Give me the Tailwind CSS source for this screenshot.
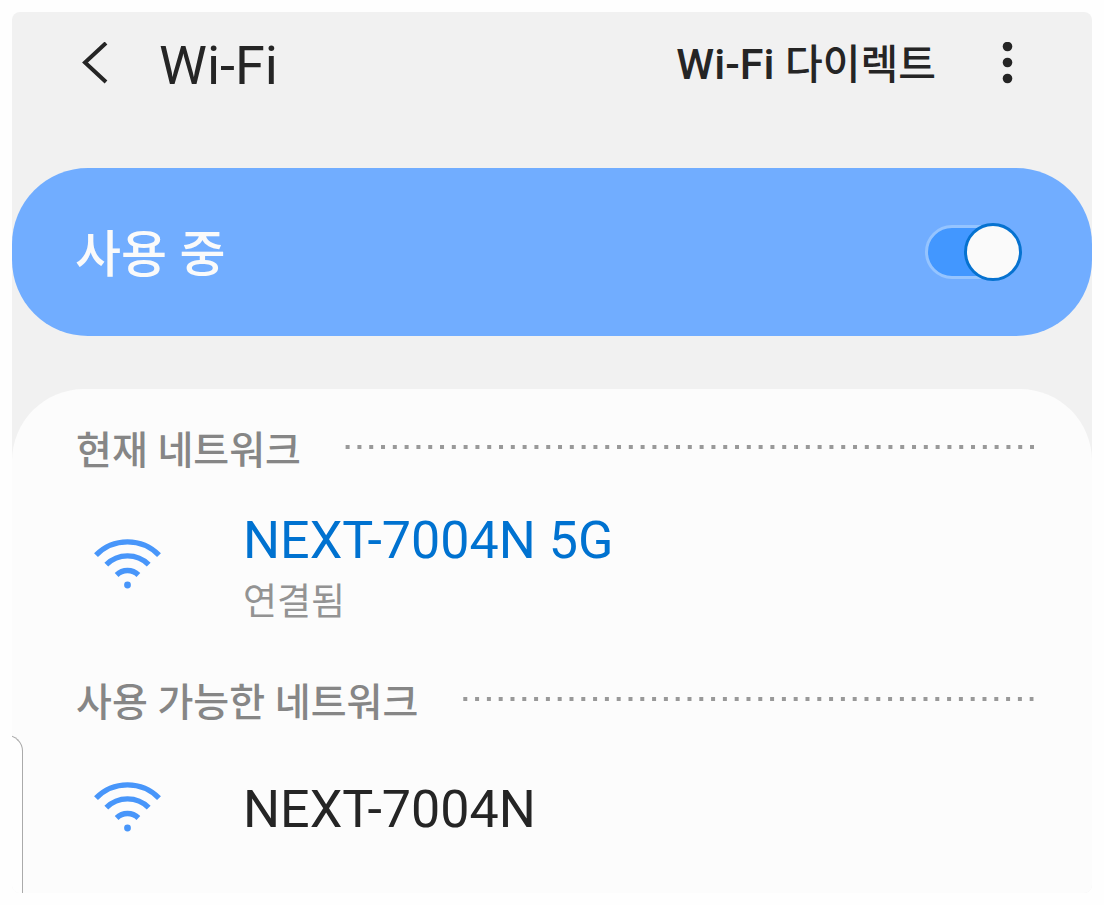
<!DOCTYPE html>
<html lang="ko">
<head>
    <meta charset="UTF-8">
    <meta name="viewport" content="width=device-width, initial-scale=1.0">
    <title>Wi-Fi</title>
    <script src="https://cdn.jsdelivr.net/npm/@tailwindcss/browser@4"></script>
</head>
<body class="min-h-screen bg-[#fefefe] p-3 font-[Roboto,'Noto_Sans_CJK_KR',sans-serif] text-[#252525]">
    <main class="overflow-hidden rounded-lg bg-[#f1f1f1]">
        <header class="flex items-center pt-[22px] pr-[74px] pb-[70px] pl-[70px]">
            <button type="button" aria-label="뒤로" class="shrink-0">
                <svg class="block h-12 w-7" viewBox="0 0 28 48" fill="none" stroke="currentColor" stroke-width="4">
                    <path d="M24 1 L3 20.5 L24 40" />
                </svg>
            </button>
            <h1 class="ml-[49px] text-[54px] leading-[64px]">Wi-Fi</h1>
            <a href="#" class="-mt-1 ml-auto text-[43px] leading-[64px] font-medium">Wi-Fi <span class="text-[41px]">다이렉트</span></a>
            <button type="button" aria-label="더보기" class="ml-[62px] shrink-0">
                <svg class="block h-12 w-5" viewBox="0 0 20 48" fill="currentColor">
                    <circle cx="9.5" cy="4.5" r="4.8" />
                    <circle cx="9.5" cy="20.5" r="4.8" />
                    <circle cx="9.5" cy="36.5" r="4.8" />
                </svg>
            </button>
        </header>

        <label class="flex h-[168px] items-center justify-between rounded-[76px] bg-[#71adff] pr-[70px] pl-[63px]">
            <span class="pt-[6px] text-[50px] leading-[64px] font-medium text-[#fafafa]">사용 중</span>
            <input type="checkbox" role="switch" checked class="relative h-[54px] w-[97px] appearance-none rounded-full border-3 border-[#95c4ff] bg-[#4297ff] before:absolute before:-top-[5px] before:-right-[3px] before:size-[58px] before:rounded-full before:border-3 before:border-[#0672d0] before:bg-[#fafafa]">
        </label>

        <div class="relative mt-[53px] rounded-t-[72px] bg-[#fcfcfc] pt-[38px] pb-[51px]">
            <section>
                <div class="flex items-center pr-[58px] pl-16">
                    <h2 class="text-[39px] leading-12 font-medium text-[#868686]">현재 네트워크</h2>
                    <svg class="mb-2 ml-11 h-1 min-w-0 flex-1 -scale-x-100" aria-hidden="true">
                        <line x1="0" y1="2" x2="100%" y2="2" stroke="#999" stroke-width="4" stroke-dasharray="4 7.8" />
                    </svg>
                </div>
                <a href="#" class="mt-[34px] flex items-center pl-[82px]">
                    <svg class="mb-[6px] h-[50px] w-[68px] shrink-0 overflow-visible" viewBox="0 0 68 50" fill="none" stroke="#4896fa" stroke-width="5.4">
                        <path d="M2 15.2 A44 44 0 0 1 65 15.2" />
                        <path d="M12.3 24.6 A30 30 0 0 1 54.7 24.6" />
                        <path d="M22.6 35 A15.6 15.6 0 0 1 44.4 35" />
                        <circle cx="33.5" cy="45" r="3.4" fill="#4896fa" stroke="none" />
                    </svg>
                    <div class="ml-[81px]">
                        <p class="text-[52px] leading-[64px] text-[#0072d0]">NEXT-7004N 5G</p>
                        <p class="mt-[6px] text-[37px] leading-12 text-[#939393]">연결됨</p>
                    </div>
                </a>
            </section>

            <section class="mt-[52px]">
                <div class="flex items-center pr-[58px] pl-16">
                    <h2 class="text-[39px] leading-12 font-medium text-[#868686]">사용 가능한 네트워크</h2>
                    <svg class="mb-2 ml-11 h-1 min-w-0 flex-1 -scale-x-100" aria-hidden="true">
                        <line x1="0" y1="2" x2="100%" y2="2" stroke="#999" stroke-width="4" stroke-dasharray="4 7.8" />
                    </svg>
                </div>
                <a href="#" class="mt-[51px] flex items-center pl-[82px]">
                    <svg class="mb-1 h-[50px] w-[68px] shrink-0 overflow-visible" viewBox="0 0 68 50" fill="none" stroke="#4896fa" stroke-width="5.4">
                        <path d="M2 15.2 A44 44 0 0 1 65 15.2" />
                        <path d="M12.3 24.6 A30 30 0 0 1 54.7 24.6" />
                        <path d="M22.6 35 A15.6 15.6 0 0 1 44.4 35" />
                        <circle cx="33.5" cy="45" r="3.4" fill="#4896fa" stroke="none" />
                    </svg>
                    <p class="ml-[81px] text-[52px] leading-[64px]">NEXT-7004N</p>
                </a>
            </section>

            <!-- edge panel handle -->
            <div class="absolute bottom-0 -left-2 h-[158px] w-[19px] rounded-tr-[16px] border-t border-r border-[#aaa] bg-[#fefefe]"></div>
        </div>
    </main>
</body>
</html>
